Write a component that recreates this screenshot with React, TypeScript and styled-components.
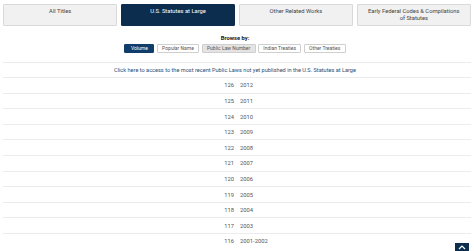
import React from "react";
import styled, { createGlobalStyle } from "styled-components";

const Global = createGlobalStyle`
  html, body { margin: 0; padding: 0; background: #fff; }
  body { font-family: Roboto, "Liberation Sans", Arial, sans-serif; overflow: hidden; }
  * { box-sizing: border-box; }
`;

const Page = styled.div`
  width: 474px;
  padding: 4px 3px 0;
`;

const Tabs = styled.div`
  display: grid;
  grid-template-columns: repeat(4, 1fr);
  column-gap: 3.5px;
`;

const Tab = styled.div<{ $active?: boolean }>`
  min-height: 20px;
  padding: 3px 8px 3px;
  text-align: center;
  font-size: 5.8px;
  line-height: 7px;
  border: 1px solid ${(p) => (p.$active ? "#0c2d4d" : "#d9d9d9")};
  background: ${(p) => (p.$active ? "#0c2d4d" : "#f1f1f1")};
  color: ${(p) => (p.$active ? "#fff" : "#444")};
  border-radius: 1px;
`;

const Browse = styled.div`
  margin-top: 9px;
  display: flex;
  flex-direction: column;
  align-items: center;
  padding-right: 4px;
`;

const BrowseLabel = styled.div`
  font-size: 5.8px;
  font-weight: 700;
  line-height: 7px;
  color: #222;
`;

const Buttons = styled.div`
  margin-top: 1.5px;
  display: flex;
  gap: 2.5px;
`;

const Btn = styled.div<{ $variant?: "active" | "hover" }>`
  height: 9.5px;
  padding: 0 ${(p) => (p.$variant === "active" ? "5.5px" : "4.3px")};
  display: flex;
  align-items: center;
  font-size: 5px;
  border: 0.6px solid ${(p) => (p.$variant === "active" ? "#113d6b" : "#cfcfcf")};
  background: ${(p) =>
    p.$variant === "active" ? "#113d6b" : p.$variant === "hover" ? "#e4e4e4" : "#fff"};
  color: ${(p) => (p.$variant === "active" ? "#fff" : "#555")};
  border-radius: 1px;
  white-space: nowrap;
`;

const Table = styled.div`
  margin-top: 8.5px;
`;

const Row = styled.div`
  height: 15.6px;
  border-top: 1px solid #ececec;
  display: grid;
  grid-template-columns: 1fr 1fr;
  align-items: center;
  font-size: 5.8px;
  color: #555;
`;

const LinkRow = styled.div`
  height: 15.6px;
  border-top: 1px solid #ececec;
  display: flex;
  align-items: center;
  justify-content: center;
  font-size: 5.6px;
  color: #2f4d70;
  padding-right: 4px;
`;

const Num = styled.span`
  text-align: right;
  padding-right: 3px;
`;

const Year = styled.span`
  padding-left: 3px;
`;

const TopButton = styled.div`
  position: fixed;
  left: 455px;
  top: 243px;
  width: 14px;
  height: 14px;
  background: #0c2d4d;
  display: flex;
  align-items: flex-start;
  justify-content: center;
  padding-top: 2px;
`;

const rows: [number, string][] = [
  [126, "2012"],
  [125, "2011"],
  [124, "2010"],
  [123, "2009"],
  [122, "2008"],
  [121, "2007"],
  [120, "2006"],
  [119, "2005"],
  [118, "2004"],
  [117, "2003"],
  [116, "2001-2002"],
];

export default function App() {
  return (
    <>
      <Global />
      <Page>
        <Tabs>
          <Tab>All Titles</Tab>
          <Tab $active>U.S. Statutes at Large</Tab>
          <Tab>Other Related Works</Tab>
          <Tab>Early Federal Codes &amp; Compilations of Statutes</Tab>
        </Tabs>
        <Browse>
          <BrowseLabel>Browse by:</BrowseLabel>
          <Buttons>
            <Btn $variant="active">Volume</Btn>
            <Btn>Popular Name</Btn>
            <Btn $variant="hover">Public Law Number</Btn>
            <Btn>Indian Treaties</Btn>
            <Btn>Other Treaties</Btn>
          </Buttons>
        </Browse>
        <Table>
          <LinkRow>
            Click here to access to the most recent Public Laws not yet published in the U.S. Statutes at Large
          </LinkRow>
          {rows.map(([n, y]) => (
            <Row key={n}>
              <Num>{n}</Num>
              <Year>{y}</Year>
            </Row>
          ))}
        </Table>
      </Page>
      <TopButton>
        <svg width="8" height="5" viewBox="0 0 8 5">
          <path d="M1 4 L4 1 L7 4" stroke="#fff" strokeWidth="1.2" fill="none" />
        </svg>
      </TopButton>
    </>
  );
}
